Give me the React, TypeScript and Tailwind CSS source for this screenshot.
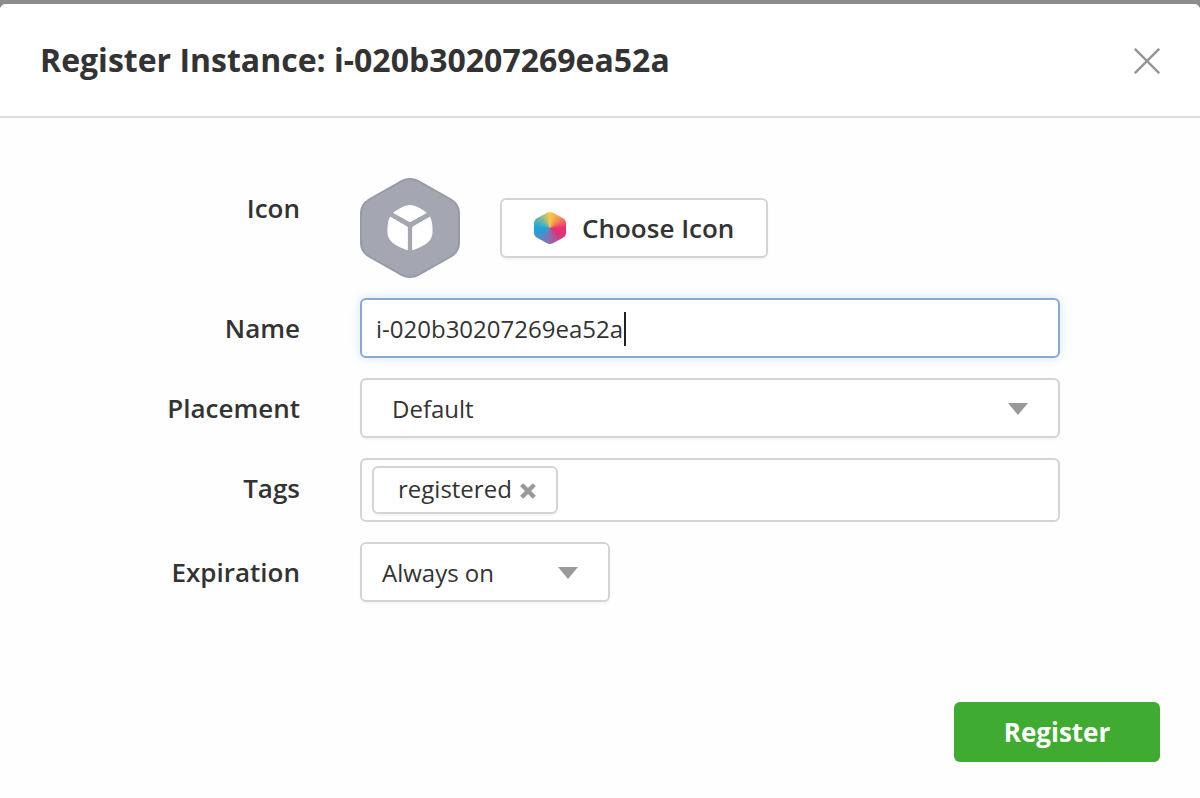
import type { ReactNode } from "react";

function Caret() {
  return (
    <svg width="20" height="12" viewBox="0 0 20 12" className="shrink-0">
      <path d="M0 0H20L10 12Z" fill="#999999" />
    </svg>
  );
}

function InstanceIcon() {
  return (
    <svg width="100" height="100" viewBox="0 0 100 100" className="shrink-0">
      <path
        d="M42 3Q50 -1 58 3L91 21.500Q99 26.500 99 35V65Q99 73.500 91 78.500L58 97Q50 101 42 97L9 78.500Q1 73.500 1 65V35Q1 26.500 9 21.500Z"
        fill="#a4a7b1"
        stroke="#989ba6"
        strokeWidth="2"
      />
      <g fill="#ffffff" stroke="#ffffff" strokeWidth="1" strokeLinejoin="round">
        <path d="M33.700 34.700Q39 31 44.500 28.500Q50 26.500 55.500 28.500Q61 31 66.300 34.700L50 43.800Z" />
        <path d="M30.200 39.200L47.300 49V71.800Q39.500 69 34.500 65.700Q28.500 61.800 28 55.500Q27.500 45 30.200 39.200Z" />
        <path d="M69.800 39.200L52.700 49V71.800Q60.500 69 65.500 65.700Q71.500 61.800 72 55.500Q72.500 45 69.800 39.200Z" />
      </g>
    </svg>
  );
}

function ColorHexagon() {
  return (
    <svg width="32" height="32" viewBox="0 0 32 32" className="shrink-0">
      <defs>
        <clipPath id="hexagon">
          <path d="M13 .8Q16 -.7 19 .8L29 6.300Q32 8 32 11.500V20.500Q32 24 29 25.700L19 31.200Q16 32.700 13 31.200L3 25.700Q0 24 0 20.500V11.500Q0 8 3 6.300Z" />
        </clipPath>
      </defs>
      <g clipPath="url(#hexagon)">
        <foreignObject width="32" height="32">
          <div className="h-8 w-8 bg-[conic-gradient(#f9cb45,#f4845a_50deg,#eb2f70_90deg,#df3274_120deg,#8e6bae_180deg,#568bc3_220deg,#17a5dc_270deg,#79b6a0_315deg,#f9cb45)]" />
        </foreignObject>
      </g>
    </svg>
  );
}

function Row({ label, children, className }: { label: string; children: ReactNode; className: string }) {
  return (
    <div className={`flex ${className}`}>
      <div className="mr-[60px] flex h-[60px] w-[300px] shrink-0 items-center justify-end text-[26px] font-semibold">
        {label}
      </div>
      {children}
    </div>
  );
}

export default function App() {
  return (
    <div className="h-[798px] w-[1200px] overflow-hidden bg-[#8b8c8f] pt-1 font-['Open_Sans',sans-serif] text-[26px] leading-[36px] text-[#333333]">
      <div className="flex h-[794px] flex-col rounded-t-[6px] bg-[#fefefe]">
        <header className="flex h-[114px] shrink-0 items-center justify-between rounded-t-[6px] border-b-2 border-[#dedede] bg-white pr-10 pl-10">
          <h1 className="text-[32px] leading-[44px] font-bold whitespace-nowrap">
            Register Instance: i-020b30207269ea52a
          </h1>
          <button aria-label="Close" className="flex pt-[2px]">
            <svg width="26" height="26" viewBox="0 0 26 26" fill="none" stroke="#949596" strokeWidth="2.400">
              <path d="M.8 .8L25.200 25.200M25.200 .8L.8 25.200" />
            </svg>
          </button>
        </header>
        <main className="flex flex-col pt-[60px]">
          <Row label="Icon" className="h-[120px]">
            <InstanceIcon />
            <button className="mt-5 ml-10 flex h-[60px] w-[268px] items-center rounded-[6px] border-2 border-[#d4d4d4] bg-white pl-8 font-semibold shadow-[0_2px_2px_rgba(0,0,0,0.04)]">
              <ColorHexagon />
              <span className="ml-4">Choose Icon</span>
            </button>
          </Row>
          <Row label="Name" className="h-20">
            <div className="flex h-[60px] w-[700px] items-center rounded-[6px] border-2 border-[#85abd5] bg-white pt-[2px] pl-[14px] text-[24px] shadow-[0_0_10px_rgba(102,160,220,0.28)]">
              <span>i-020b30207269ea52a</span>
              <span className="ml-px h-[34px] w-[2px] bg-[#222222]" />
            </div>
          </Row>
          <Row label="Placement" className="h-20">
            <div className="flex h-[60px] w-[700px] items-center justify-between rounded-[6px] border-2 border-[#d4d4d4] bg-white pt-[2px] pr-[30px] pl-[30px] text-[24px] shadow-[0_2px_2px_rgba(0,0,0,0.04)]">
              <span>Default</span>
              <Caret />
            </div>
          </Row>
          <Row label="Tags" className="h-[84px]">
            <div className="flex h-16 w-[700px] rounded-[6px] border-2 border-[#d4d4d4] bg-white pt-[6px] pl-[10px] text-[24px]">
              <div className="flex h-12 w-[186px] items-center rounded-[6px] border-2 border-[#d4d4d4] pl-6 shadow-[0_2px_2px_rgba(0,0,0,0.04)]">
                <span className="pb-[2px]">registered</span>
                <svg width="16" height="16" viewBox="0 0 16 16" className="mt-[2px] ml-2 shrink-0" stroke="#999999" strokeWidth="4.400">
                  <path d="M1.700 1.700L14.300 14.300M14.300 1.700L1.700 14.300" />
                </svg>
              </div>
            </div>
          </Row>
          <Row label="Expiration" className="h-[60px]">
            <div className="flex h-[60px] w-[250px] items-center justify-between rounded-[6px] border-2 border-[#d4d4d4] bg-white pt-[2px] pr-[30px] pl-5 text-[24px] shadow-[0_2px_2px_rgba(0,0,0,0.04)]">
              <span>Always on</span>
              <Caret />
            </div>
          </Row>
        </main>
        <footer className="mt-[100px] flex justify-end pr-10">
          <button className="h-[60px] w-[206px] rounded-[6px] bg-[#3fac31] text-[26px] font-bold text-white">
            Register
          </button>
        </footer>
      </div>
    </div>
  );
}
